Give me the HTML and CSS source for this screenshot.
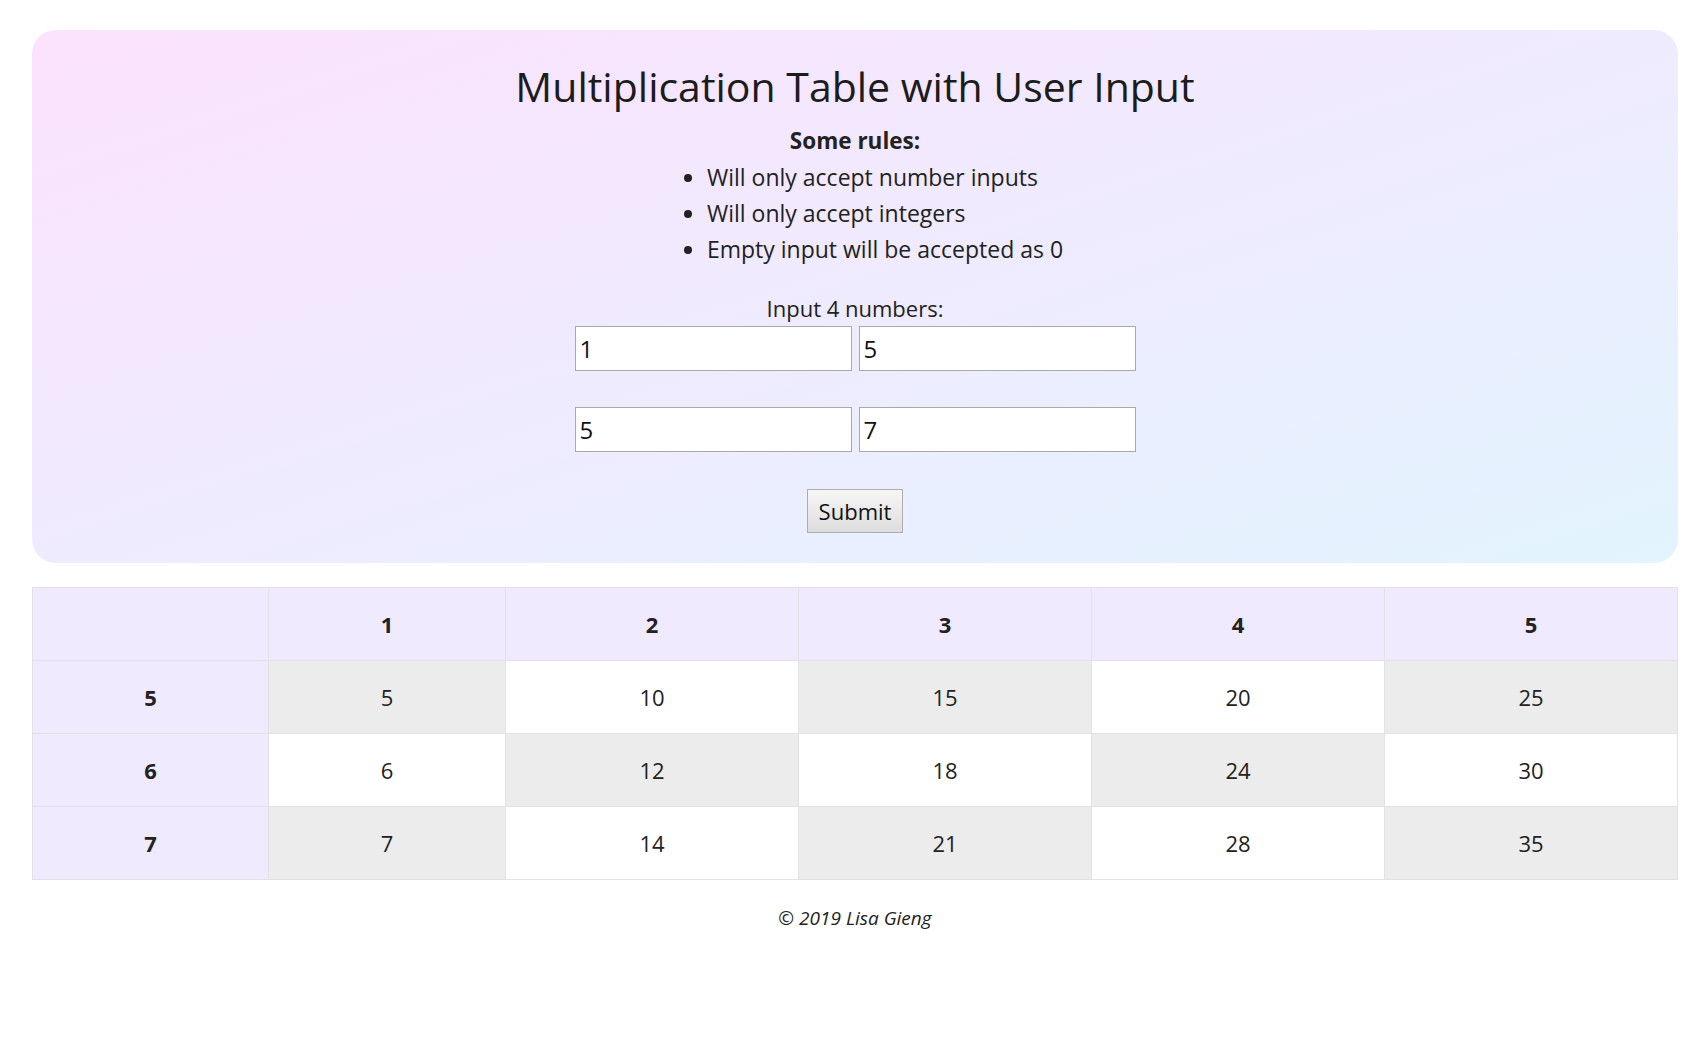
FILE: index.html
```html
<!DOCTYPE html>
<html lang="en">
<head>
<meta charset="utf-8">
<title>Multiplication Table with User Input</title>
<link rel="stylesheet" href="styles.css">
</head>
<body>
<main class="page">
  <section class="card">
    <h1 class="title">Multiplication Table with User Input</h1>
    <p class="rules-head">Some rules:</p>
    <ul class="rules">
      <li>Will only accept number inputs</li>
      <li>Will only accept integers</li>
      <li>Empty input will be accepted as 0</li>
    </ul>
    <form class="form">
      <label class="form-label">Input 4 numbers:</label>
      <div class="inputs">
        <input class="num" type="text" value="1">
        <input class="num" type="text" value="5">
        <input class="num" type="text" value="5">
        <input class="num" type="text" value="7">
      </div>
      <button class="submit" type="button">Submit</button>
    </form>
  </section>

  <table class="grid">
    <colgroup>
      <col class="c-first">
      <col class="c-second">
      <col class="c-rest">
      <col class="c-rest">
      <col class="c-rest">
      <col class="c-rest">
    </colgroup>
    <thead>
      <tr>
        <th class="head"></th>
        <th class="head">1</th>
        <th class="head">2</th>
        <th class="head">3</th>
        <th class="head">4</th>
        <th class="head">5</th>
      </tr>
    </thead>
    <tbody>
      <tr>
        <th class="head">5</th>
        <td class="shade">5</td><td>10</td><td class="shade">15</td><td>20</td><td class="shade">25</td>
      </tr>
      <tr>
        <th class="head">6</th>
        <td>6</td><td class="shade">12</td><td>18</td><td class="shade">24</td><td>30</td>
      </tr>
      <tr>
        <th class="head">7</th>
        <td class="shade">7</td><td>14</td><td class="shade">21</td><td>28</td><td class="shade">35</td>
      </tr>
    </tbody>
  </table>

  <footer class="footer">© 2019 Lisa Gieng</footer>
</main>
</body>
</html>
```

FILE: styles.css
```css
* { box-sizing: border-box; }

html, body {
  margin: 0;
  padding: 0;
  background: #ffffff;
}

body {
  font-family: "Open Sans", "Noto Sans", "Liberation Sans", sans-serif;
  color: #222222;
  font-size: 22px;
  line-height: 36px;
}

.page {
  padding: 30px 29px 0 32px;
}

.card {
  border-radius: 24px;
  background: linear-gradient(to bottom right, #fce2fd 0%, #efebfe 50%, #e2f4fe 100%);
  padding: 32px 0 30px;
  text-align: center;
  display: flex;
  flex-direction: column;
  align-items: center;
}

.title {
  margin: 0;
  font-size: 41px;
  line-height: 48px;
  font-weight: 500;
  color: #1c1c1c;
}

.rules-head {
  margin: 13px 0 0;
  font-weight: 700;
  font-size: 22.5px;
}

.rules {
  margin: 0 0 0 40px;
  padding: 0 0 0 20px;
  text-align: left;
  font-size: 23px;
}

.rules li {
  padding-left: 0;
}

.form {
  margin-top: 23px;
  display: flex;
  flex-direction: column;
  align-items: center;
}

.form-label {
  display: block;
}

.inputs {
  display: grid;
  grid-template-columns: 277px 277px;
  column-gap: 7px;
  row-gap: 36px;
}

.num {
  height: 45px;
  margin: 0;
  border: 1px solid #a9a9a9;
  background: #ffffff;
  padding: 2px 4px;
  font-family: inherit;
  font-size: 24px;
  color: #111111;
  outline: none;
}

.submit {
  margin-top: 37px;
  height: 44px;
  padding: 0 11px;
  font-family: inherit;
  font-size: 22px;
  color: #111111;
  border: 1px solid #adadad;
  border-radius: 0;
  background: linear-gradient(to bottom, #f6f6f6, #dddddd);
}

.grid {
  margin-top: 24px;
  width: 1645px;
  border-collapse: collapse;
  table-layout: fixed;
  font-size: 22px;
}

.c-first { width: 236px; }
.c-second { width: 237px; }
.c-rest { width: 293px; }

.grid th,
.grid td {
  height: 73px;
  border: 1px solid #e1e1e6;
  text-align: center;
  vertical-align: middle;
  padding: 0;
  background: #ffffff;
}

.grid th.head {
  background: #efeafd;
  font-weight: 700;
}

.grid td.shade {
  background: #ececec;
}

.footer {
  margin-top: 25px;
  text-align: center;
  font-style: italic;
  font-size: 19px;
  line-height: 27px;
}
```
